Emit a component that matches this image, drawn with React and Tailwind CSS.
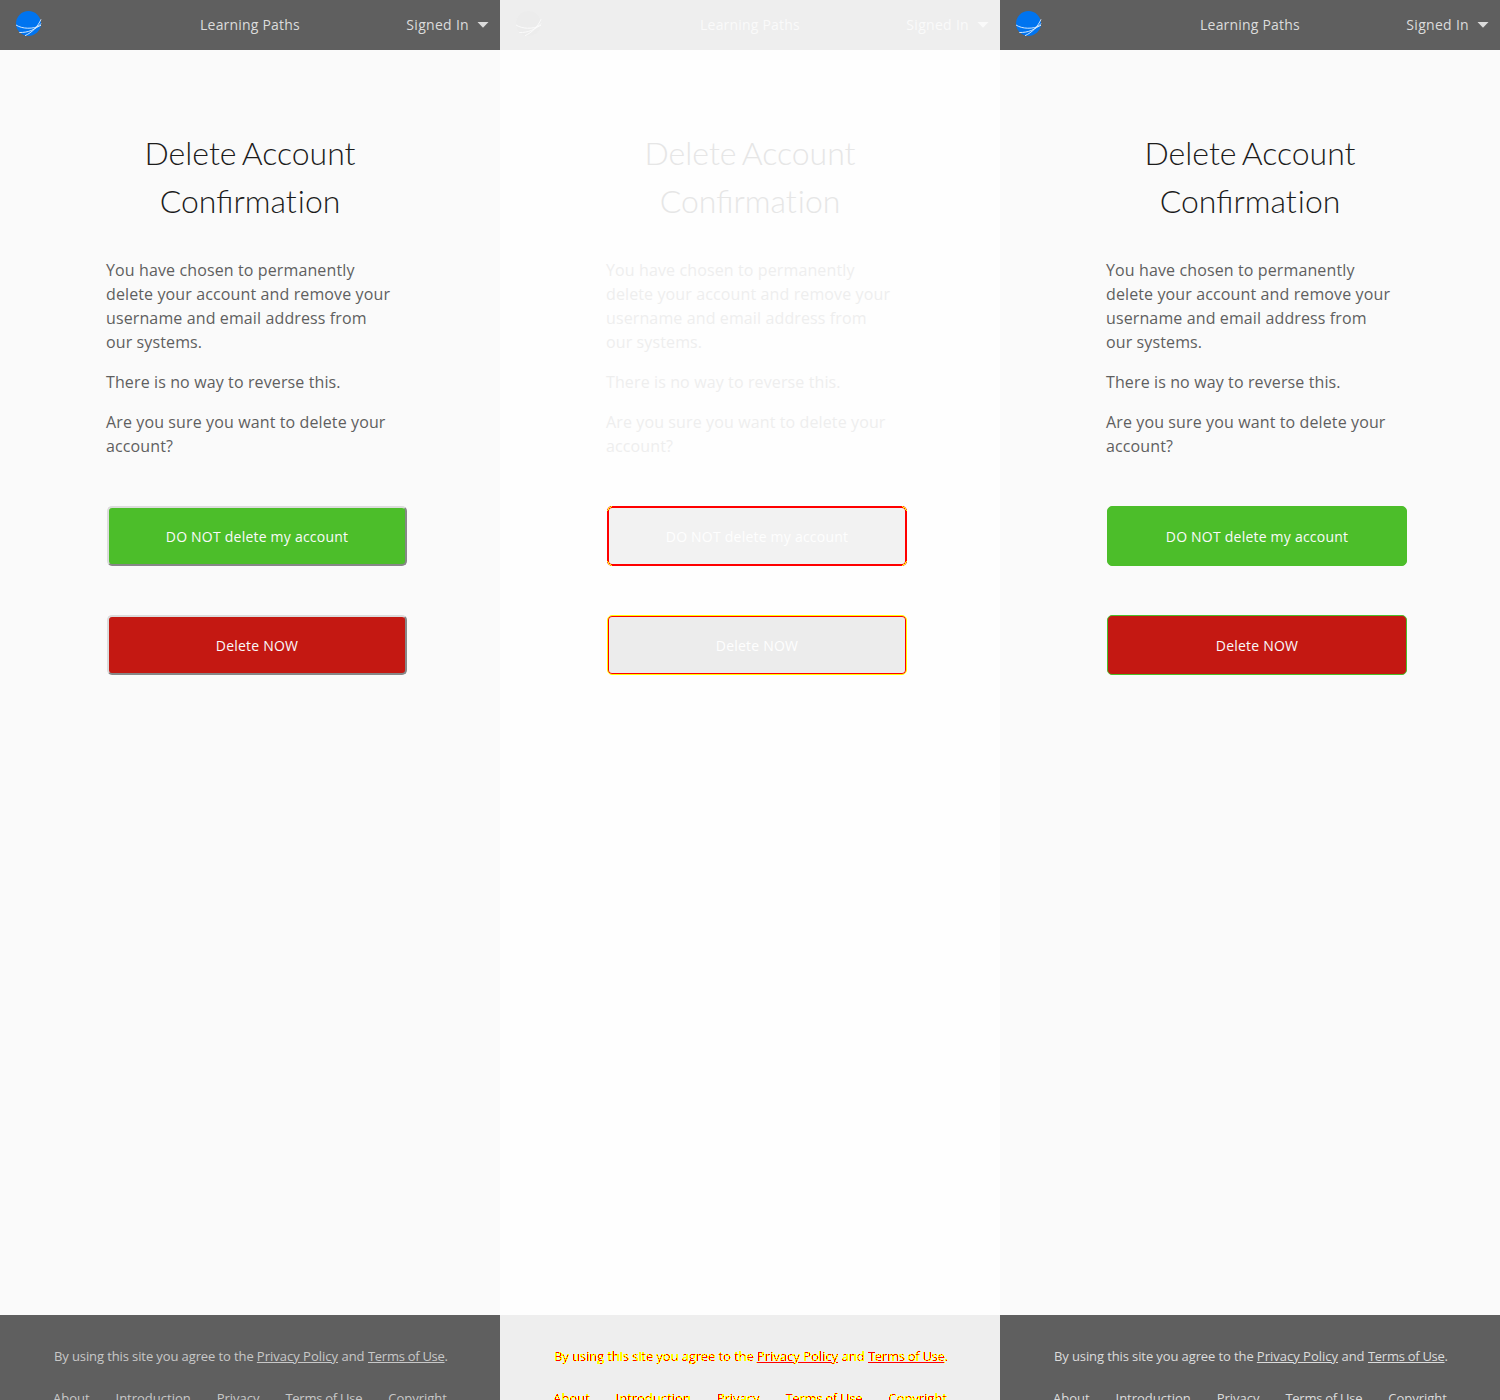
const palettes = {
  before: {
    page: 'bg-[#fafafa]',
    bar: 'bg-[#5f5f5f]',
    nav: 'text-[#dcdcdc]',
    globe: '#0074f0',
    streak: '#e8f2fc',
    title: 'text-[#1c1c1c]',
    body: 'text-[#5f5f5f]',
    button: 'text-[#fafafa]',
    keep: 'bg-[#4cbe2a] border-2 border-t-[#dcdcdc] border-l-[#dcdcdc] border-r-[#878787] border-b-[#878787]',
    remove: 'bg-[#c41812] border-2 border-t-[#dcdcdc] border-l-[#dcdcdc] border-r-[#878787] border-b-[#878787]',
    footer: 'text-[#c8c8c8]',
  },
  diff: {
    page: 'bg-[#fefefe]',
    bar: 'bg-[#eeeeee]',
    nav: 'text-[#fafafa]',
    globe: '#ececec',
    streak: '#fcfcfc',
    title: 'text-[#e6e6e6]',
    body: 'text-[#eeeeee]',
    button: 'text-[#fefefe]',
    keep: 'bg-[#f2f2f2] border-2 border-[#ff0000]',
    remove: 'bg-[#ececec] border border-[#ffff00] shadow-[inset_0_0_0_1px_#ff0000]',
    footer: 'text-[#ff0000] [filter:url(#edge-marks)]',
    corners: true,
  },
  after: {
    page: 'bg-[#fafafa]',
    bar: 'bg-[#5f5f5f]',
    nav: 'text-[#dcdcdc]',
    globe: '#0074f0',
    streak: '#e8f2fc',
    title: 'text-[#1c1c1c]',
    body: 'text-[#5f5f5f]',
    button: 'text-[#fafafa]',
    keep: 'bg-[#4cbe2a] border border-[#4cbe2a]',
    remove: 'bg-[#c41812] border border-[#4cbe2a]',
    footer: 'text-[#dcdcdc]',
  },
};

function Globe({ fill, streak }) {
  return (
    <svg className="mb-[2px] ml-[15px] h-[26px] w-[27px]" viewBox="0 0 27 26">
      <circle cx="13.5" cy="12.5" r="12.5" fill={fill} />
      <g fill="none" stroke={streak} strokeWidth="0.9">
        <path d="M1 14C7 18 18 18.5 26 14.3" />
        <path d="M4.3 21.5C13 21.8 21 18.5 26 12.5" />
        <path d="M10 24.7C17 21.5 23 15.5 26 8.3" />
      </g>
    </svg>
  );
}

/* Turns solid glyph pixels red and partly covered ones yellow. */
function EdgeMarks() {
  return (
    <svg className="absolute h-0 w-0" aria-hidden="true">
      <filter id="edge-marks" colorInterpolationFilters="sRGB" x="0" y="0" width="100%" height="100%">
        <feColorMatrix values="0 0 0 0 1  0 0 0 -50 38  0 0 0 0 0  0 0 0 50 -3" />
      </filter>
    </svg>
  );
}

function CornerMarks() {
  return (
    <svg className="absolute -inset-[2px] h-[60px] w-[300px]" viewBox="0 0 300 60" fill="none" stroke="#ffff00" shapeRendering="crispEdges">
      <path d="M0.5 5L2 2L5 0.5M295 0.5L298 2L299.5 5M299.5 55L298 58L295 59.5M5 59.5L2 58L0.5 55" />
    </svg>
  );
}

function Screen({ palette: p }) {
  return (
    <section className={`flex h-[1400px] w-[500px] flex-col overflow-hidden ${p.page}`}>
      <header className={`grid h-[50px] shrink-0 grid-cols-[1fr_auto_1fr] items-center text-sm ${p.bar} ${p.nav}`}>
        <Globe fill={p.globe} streak={p.streak} />
        <span className="tracking-[0.2px]">Learning Paths</span>
        <span className="flex items-center justify-end gap-2 pr-[11px] tracking-[0.3px]">
          Signed In
          <svg className="h-[6px] w-3" viewBox="0 0 12 6">
            <path d="M0.5 0h11L6 5.7z" fill="currentColor" />
          </svg>
        </span>
      </header>
      <main className="grow px-[106px] pt-[79px]">
        <h1 className={`text-center font-[Lato] text-[32px] leading-[48px] font-light [word-spacing:-2.5px] ${p.title}`}>
          Delete Account
          <br />
          Confirmat<span className="inline-block pl-px">ion</span>
        </h1>
        <div className={`mt-[33px] w-[286px] space-y-4 text-base leading-6 tracking-[0.12px] ${p.body}`}>
          <p>You have chosen to permanently delete your account and remove your username and email address from our systems.</p>
          <p>There is no way to reverse this.</p>
          <p>Are you sure you want to delete your account?</p>
        </div>
        <div className={`mt-12 ml-px space-y-[49px] text-sm tracking-[0.22px] ${p.button}`}>
          <button className={`relative block h-[60px] w-[300px] rounded-[5px] pt-[2px] ${p.keep}`}>
            DO NOT delete my account
            {p.corners && <CornerMarks />}
          </button>
          <button className={`block h-[60px] w-[300px] rounded-[5px] pt-[2px] ${p.remove}`}>Delete NOW</button>
        </div>
      </main>
      <footer className={`h-[85px] shrink-0 overflow-hidden pt-[31px] ${p.bar}`}>
        <div className={`text-[13px] leading-[20px] ${p.footer}`}>
          <p className="pl-[2px] text-center">
            <span className="tracking-[-0.11px]">By using this site you agree to the </span>
            <a className="underline">Privacy Policy</a> and <a className="tracking-[-0.28px] underline">Terms of Use</a>.
          </p>
          <nav className="mt-[22px] flex justify-between px-[53px]">
            <a>About</a>
            <a>Introduction</a>
            <a>Privacy</a>
            <a className="tracking-[-0.25px]">Terms of Use</a>
            <a>Copyright</a>
          </nav>
        </div>
      </footer>
    </section>
  );
}

export default function App() {
  return (
    <div className="flex h-[1400px] w-[1500px] overflow-hidden font-['Open_Sans',sans-serif]">
      <EdgeMarks />
      <Screen palette={palettes.before} />
      <Screen palette={palettes.diff} />
      <Screen palette={palettes.after} />
    </div>
  );
}
